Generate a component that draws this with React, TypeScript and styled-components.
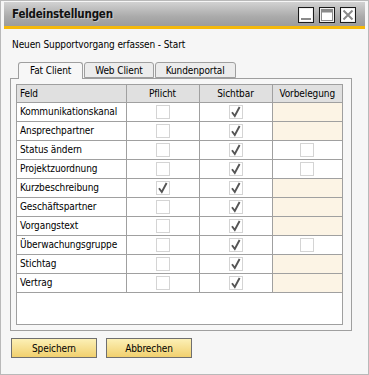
import styled, { createGlobalStyle } from "styled-components";

const GlobalStyle = createGlobalStyle`
	html, body {
		margin: 0;
		padding: 0;
		background: #ffffff;
	}
	* {
		box-sizing: border-box;
	}
`;

interface FieldRow {
	name: string;
	required: boolean;
	visible: boolean;
	preset: boolean;
}

const rows: FieldRow[] = [
	{ name: "Kommunikationskanal", required: false, visible: true, preset: false },
	{ name: "Ansprechpartner", required: false, visible: true, preset: false },
	{ name: "Status ändern", required: false, visible: true, preset: true },
	{ name: "Projektzuordnung", required: false, visible: true, preset: true },
	{ name: "Kurzbeschreibung", required: true, visible: true, preset: false },
	{ name: "Geschäftspartner", required: false, visible: true, preset: false },
	{ name: "Vorgangstext", required: false, visible: true, preset: false },
	{ name: "Überwachungsgruppe", required: false, visible: true, preset: true },
	{ name: "Stichtag", required: false, visible: true, preset: false },
	{ name: "Vertrag", required: false, visible: true, preset: false },
];

const tabs = ["Fat Client", "Web Client", "Kundenportal"];

const FONT = `"DejaVu Sans Condensed", "DejaVu Sans", sans-serif`;

const CheckBox = ({ checked }: { checked: boolean }) => (
	<Box>
		{checked && (
			<svg width="12" height="12" viewBox="0 0 12 12">
				<path
					d="M2 6.2 L4.8 10 L9.6 1"
					fill="none"
					stroke="#555555"
					strokeWidth="1.9"
					strokeLinejoin="miter"
				/>
			</svg>
		)}
	</Box>
);

const WinButton = ({ kind }: { kind: "min" | "max" | "close" }) => (
	<WinBtn>
		<svg width="12" height="12" viewBox="0 0 12 12">
			{kind === "min" && <rect x="1" y="9" width="10" height="2" fill="#8a8a8a" />}
			{kind === "max" && (
				<>
					<rect x="0.5" y="0.5" width="11" height="11" fill="none" stroke="#8a8a8a" />
					<rect x="0.5" y="0.5" width="11" height="3" fill="#8a8a8a" />
				</>
			)}
			{kind === "close" && (
				<path d="M1.5 1.5 L10.5 10.5 M10.5 1.5 L1.5 10.5" stroke="#8a8a8a" strokeWidth="2" />
			)}
		</svg>
	</WinBtn>
);

const App = () => {
	return (
		<>
			<GlobalStyle />
			<Window>
				<TitleBar>
					<Title>Feldeinstellungen</Title>
					<WinButtons>
						<WinButton kind="min" />
						<WinButton kind="max" />
						<WinButton kind="close" />
					</WinButtons>
				</TitleBar>
				<Body>
					<Subtitle>Neuen Supportvorgang erfassen - Start</Subtitle>
					<TabRow>
						{tabs.map((t, i) => (
							<Tab key={t} active={i === 0}>
								{t}
							</Tab>
						))}
					</TabRow>
					<Panel>
						<TableBox>
							<Grid>
								<thead>
									<tr>
										<Th align="left">Feld</Th>
										<Th>Pflicht</Th>
										<Th>Sichtbar</Th>
										<Th>Vorbelegung</Th>
									</tr>
								</thead>
								<tbody>
									{rows.map((r) => (
										<tr key={r.name}>
											<NameCell>{r.name}</NameCell>
											<Td>
												<CheckBox checked={r.required} />
											</Td>
											<Td>
												<CheckBox checked={r.visible} />
											</Td>
											<Td inactive={!r.preset}>
												{r.preset && <CheckBox checked={false} />}
											</Td>
										</tr>
									))}
								</tbody>
							</Grid>
						</TableBox>
					</Panel>
					<Buttons>
						<ActionButton>Speichern</ActionButton>
						<ActionButton>Abbrechen</ActionButton>
					</Buttons>
				</Body>
			</Window>
		</>
	);
};

export default App;

const Window = styled.div`
	width: 369px;
	height: 375px;
	border: 1px solid #b9b9b9;
	background: #f6f6f6;
	padding: 1px 3px 3px 3px;
	display: flex;
	flex-direction: column;
	font-family: ${FONT};
	font-size: 10px;
	letter-spacing: -0.1px;
	color: #000;
`;

const TitleBar = styled.div`
	height: 27px;
	flex-shrink: 0;
	display: flex;
	align-items: center;
	justify-content: space-between;
	padding: 0 9px 0 8px;
	background: linear-gradient(#d2d2d2, #ababab 60%, #9c9c9c);
	border-bottom: 3px solid #f5b90b;
`;

const Title = styled.div`
	font-weight: bold;
	font-size: 11.5px;
	letter-spacing: -0.2px;
	color: #111;
	text-shadow: 1px 1px 0 rgba(255, 255, 255, 0.35);
`;

const WinButtons = styled.div`
	display: flex;
	gap: 5px;
	margin-top: 1px;
`;

const WinBtn = styled.div`
	width: 16px;
	height: 16px;
	border: 1px solid #1a1a1a;
	background: #ffffff;
	display: flex;
	align-items: center;
	justify-content: center;
	box-shadow: inset 0 0 0 1px #f0f0f0;
`;

const Body = styled.div`
	flex: 1;
	display: flex;
	flex-direction: column;
	padding: 0 13px 0 6px;
`;

const Subtitle = styled.div`
	margin-top: 9px;
	height: 14px;
	line-height: 14px;
	padding-left: 2px;
`;

const TabRow = styled.div`
	margin-top: 10px;
	display: flex;
	padding-left: 8px;
	height: 16px;
	align-items: flex-end;
`;

const Tab = styled.div<{ active: boolean }>`
	height: ${(p) => (p.active ? "17px" : "16px")};
	margin-bottom: ${(p) => (p.active ? "-1px" : "0")};
	padding: 0 ${(p) => (p.active ? "11px" : "10px")};
	border: 1px solid #9f9f9f;
	border-bottom: ${(p) => (p.active ? "none" : "1px solid #9f9f9f")};
	border-radius: 3px 3px 0 0;
	margin-right: 1px;
	background: ${(p) => (p.active ? "#f7f7f7" : "#ececec")};
	line-height: 15px;
	position: relative;
	z-index: ${(p) => (p.active ? 2 : 1)};
`;

const Panel = styled.div`
	height: 253px;
	border: 1px solid #9f9f9f;
	padding: 5px 8px 5px 5px;
	background: #f7f7f7;
	position: relative;
	z-index: 1;
`;

const TableBox = styled.div`
	height: 100%;
	border: 1px solid #9f9f9f;
	background: #ffffff;
`;

const Grid = styled.table`
	width: 100%;
	border-collapse: collapse;
	table-layout: fixed;
`;

const Th = styled.th<{ align?: string }>`
	height: 17px;
	padding: 0 3px;
	font-weight: normal;
	text-align: ${(p) => p.align || "center"};
	background: #e0e0e0;
	border: 1px solid #a0a0a0;
	border-top: none;

	&:first-child {
		border-left: none;
		width: 109px;
	}
	&:nth-child(2),
	&:nth-child(3) {
		width: 73px;
	}
	&:last-child {
		border-right: none;
	}
`;

const Td = styled.td<{ inactive?: boolean }>`
	height: 19px;
	padding: 0;
	border: 1px solid #a0a0a0;
	background: ${(p) => (p.inactive ? "#fcf4e5" : "#ffffff")};
	text-align: center;
	vertical-align: middle;

	&:last-child {
		border-right: none;
	}
`;

const NameCell = styled(Td)`
	text-align: left;
	padding-left: 3px;
	border-left: none;
	white-space: nowrap;
	overflow: hidden;
`;

const Box = styled.span`
	display: inline-flex;
	align-items: center;
	justify-content: center;
	width: 14px;
	height: 14px;
	border: 1px solid #d4d4d4;
	background: #ffffff;
	vertical-align: middle;
`;

const Buttons = styled.div`
	display: flex;
	gap: 9px;
	margin-top: 7px;
	padding-left: 1px;
`;

const ActionButton = styled.button`
	width: 86px;
	height: 20px;
	border: 1px solid #6f6f6f;
	background: linear-gradient(#fcf0b6, #f1d06e);
	font-family: ${FONT};
	font-size: 10px;
	letter-spacing: -0.1px;
	color: #000;
	padding: 0;
`;
